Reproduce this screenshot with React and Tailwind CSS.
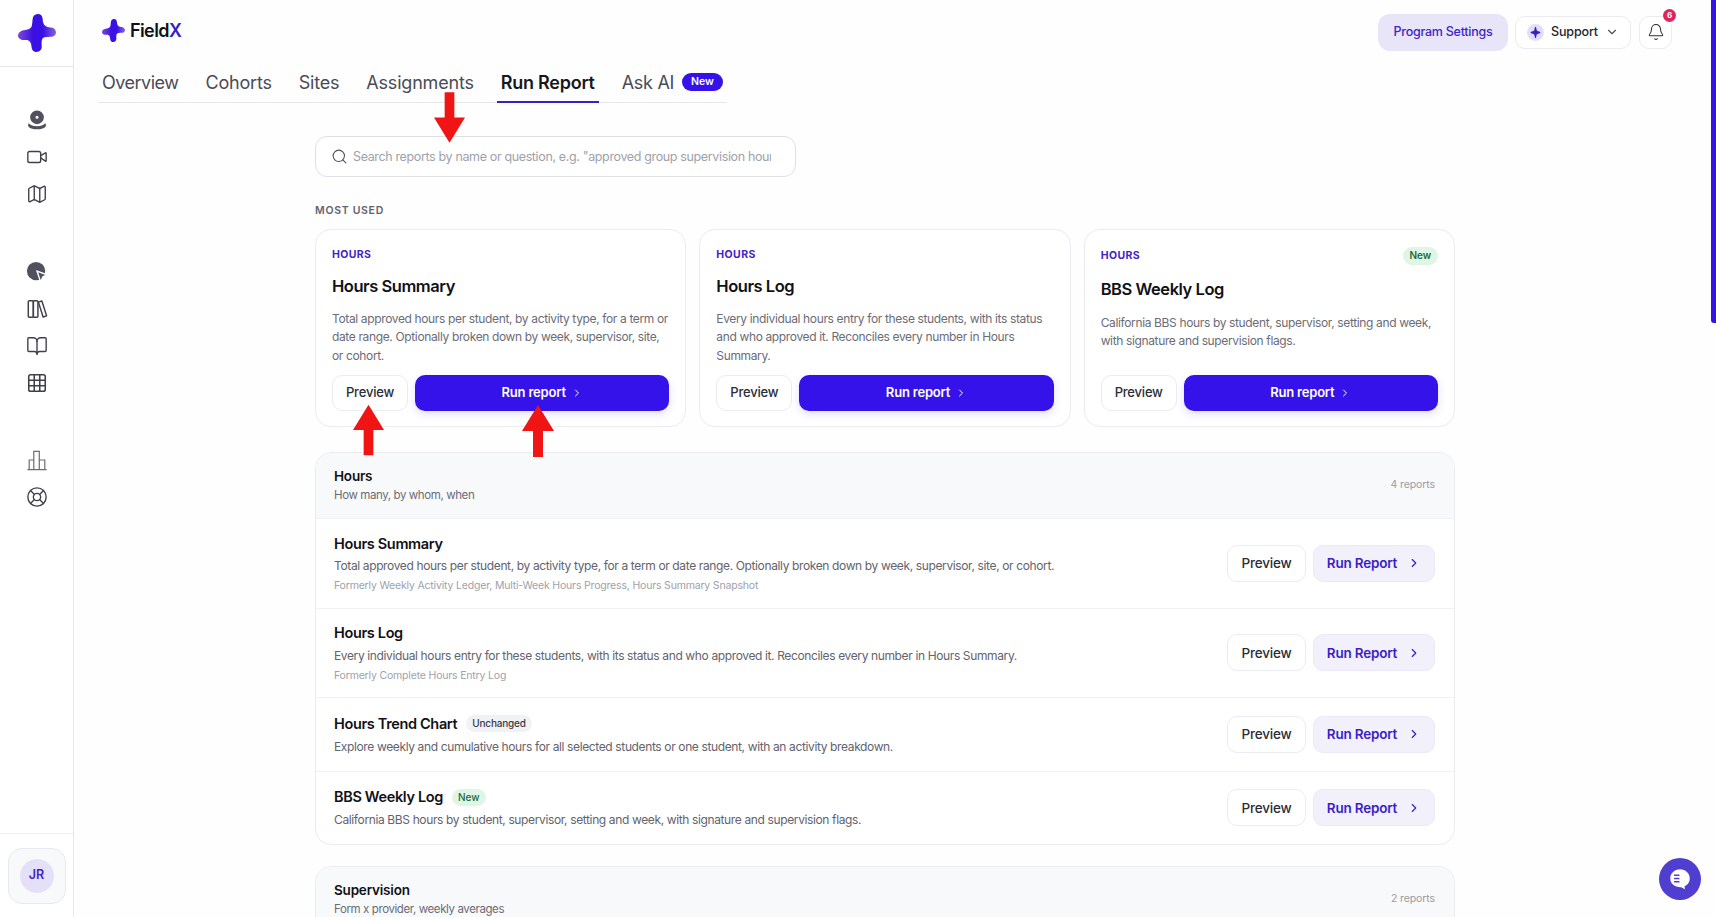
import React from "react";
import { Search, ChevronRight, ChevronDown, Bell, Video, Map, BookOpen, Grid3x3, LifeBuoy } from "lucide-react";

const font = { fontFamily: "Inter, 'Liberation Sans', sans-serif" };

const Logo = ({ className, id }) => (
  <svg viewBox="0 0 40 40" className={className}>
    <defs>
      <linearGradient id={id} x1="0" y1="0" x2="1" y2="0">
        <stop offset="0" stopColor="#7d4ad6" />
        <stop offset="0.4" stopColor="#3a10e5" />
        <stop offset="0.65" stopColor="#3a10e5" />
        <stop offset="1" stopColor="#8a63da" />
      </linearGradient>
    </defs>
    <path
      d="M21 0C24 0 25.700 2 25.900 5C26.200 9 26.800 12 31 13.600C33 14 36 13.800 37.500 15C39.500 16.500 40 18 40 19.500C40 22 37.500 24 34.600 24C31 24.300 27 24 25.700 26C24.600 28 24.800 31 25 34C25.200 37.500 23 40 19.500 40C16.500 40 14.500 38 14.300 35C14 31.500 13.500 29 10.500 27.500C8.500 26.800 6 28 3.500 27C1 26 0 24.500 0 22.900C0 19.500 3 17.500 6 17C10 16.500 13.500 15.500 14.500 12.500C15.400 9 15 5 16 3C17 1 19 0 21 0Z"
      fill={`url(#${id})`}
    />
  </svg>
);

const Arrow = ({ className, down }) => (
  <svg viewBox="0 0 32 52" className={className}>
    <path d={down ? "M11 0h10v26h11L16 52 0 26h11z" : "M16 0l16 26H21v26H11V26H0z"} fill="#f01414" />
  </svg>
);

const Webcam = () => (
  <svg viewBox="0 0 24 24" className="w-[22px] h-[22px]" fill="#50515c">
    <path fillRule="evenodd" d="M12 1.500a7.500 7.500 0 1 1 0 15 7.500 7.500 0 0 1 0-15zm0 5.800a1.700 1.700 0 1 0 0 3.400 1.700 1.700 0 0 0 0-3.400z" />
    <path d="M3 15.500c1.800 2 5 3.200 9 3.200s7.200-1.200 9-3.200c.8 1 1 2 .6 3-1 2.200-4.600 3.700-9.600 3.700S3.400 20.700 2.400 18.500c-.4-1-.2-2 .6-3z" />
  </svg>
);

const Pie = () => (
  <svg viewBox="0 0 24 24" className="w-[22px] h-[22px]">
    <circle cx="11" cy="11" r="10" fill="#50515c" />
    <path d="M12 11l11 4-4.500 2.200L16 23z" fill="#50515c" stroke="#ffffff" strokeWidth="1.500" />
  </svg>
);

const Books = () => (
  <svg viewBox="0 0 24 24" className="w-[22px] h-[22px]" fill="none" stroke="#3f404a" strokeWidth="1.600" strokeLinejoin="round">
    <rect x="2.500" y="3" width="5.500" height="18" rx="1" />
    <rect x="8" y="3" width="5" height="18" rx="1" />
    <path d="M13.500 4.500l3.800-1.300 5.200 16.300-3.800 1.300z" />
  </svg>
);

const Bars = () => (
  <svg viewBox="0 0 24 24" className="w-[22px] h-[22px]" fill="none" stroke="#6b6c76" strokeWidth="1.300">
    <path d="M1.500 22.500h21M3.500 22.500V12h5v10.500M8.500 22.500V2.500h6v20M14.500 12h6v10.500" />
  </svg>
);

const Spark = () => (
  <svg viewBox="0 0 24 24" className="w-[17px] h-[17px]">
    <circle cx="12" cy="12" r="12" fill="#e3def8" />
    <path d="M12 4c1 0 1.300 4 2 5.500 1 .6 5 1 5 2.500s-4 1.800-5 2.500C13.300 16 13 20 12 20s-1.300-4-2-5.500C9 13.800 5 13.500 5 12s4-1.900 5-2.500C10.700 8 11 4 12 4z" fill="#3a1fc9" />
  </svg>
);

const tabs = ["Cohorts", "Sites", "Assignments"];

const topCards = [
  {
    title: "Hours Summary",
    desc: "Total approved hours per student, by activity type, for a term or date range. Optionally broken down by week, supervisor, site, or cohort.",
  },
  {
    title: "Hours Log",
    desc: "Every individual hours entry for these students, with its status and who approved it. Reconciles every number in Hours Summary.",
  },
  {
    title: "BBS Weekly Log",
    desc: "California BBS hours by student, supervisor, setting and week, with signature and supervision flags.",
    isNew: true,
  },
];

const rows = [
  {
    title: "Hours Summary",
    desc: "Total approved hours per student, by activity type, for a term or date range. Optionally broken down by week, supervisor, site, or cohort.",
    old: "Formerly Weekly Activity Ledger, Multi-Week Hours Progress, Hours Summary Snapshot",
    h: "h-[90px]",
  },
  {
    title: "Hours Log",
    desc: "Every individual hours entry for these students, with its status and who approved it. Reconciles every number in Hours Summary.",
    old: "Formerly Complete Hours Entry Log",
    h: "h-[89px]",
  },
  {
    title: "Hours Trend Chart",
    badge: "Unchanged",
    desc: "Explore weekly and cumulative hours for all selected students or one student, with an activity breakdown.",
    h: "h-[74px]",
  },
  {
    title: "BBS Weekly Log",
    badge: "New",
    desc: "California BBS hours by student, supervisor, setting and week, with signature and supervision flags.",
    h: "h-[73px]",
  },
];

const TopCard = ({ card }) => (
  <div className="flex-1 h-[198px] border border-[#ebecf0] rounded-[16px] bg-white px-[16px] pt-[17px] pb-[15px] flex flex-col">
    <div className="flex items-center justify-between">
      <span className="text-[10.500px] font-bold tracking-[0.4px] text-[#3f25c4]">HOURS</span>
      {card.isNew && (
        <span className="h-[18px] px-[7px] flex items-center rounded-full bg-[#dff5e6] text-[10px] font-semibold tracking-[-0.1px] text-[#1e6b3c]">New</span>
      )}
    </div>
    <h3 className={`text-[16.500px] font-semibold tracking-[-0.45px] text-[#111116] ${card.isNew ? "mt-[12px]" : "mt-[11px]"}`}>{card.title}</h3>
    <p className="mt-[12px] text-[12px] leading-[18.200px] tracking-[-0.36px] text-[#6b6c76]">{card.desc}</p>
    <div className="mt-auto flex gap-[7px]">
      <button className="w-[76px] h-[36px] border border-[#ebecf0] rounded-[10px] bg-white text-[13px] font-medium tracking-[-0.2px] text-[#2b2c36]">Preview</button>
      <button className="flex-1 h-[36px] rounded-[10px] bg-[#3511ea] text-white text-[13px] font-semibold tracking-[-0.2px] flex items-center justify-center gap-[5px] shadow-[0_3px_8px_rgba(53,17,234,0.15)]">
        Run report <ChevronRight className="w-[12px] h-[12px]" />
      </button>
    </div>
  </div>
);

const Row = ({ row }) => (
  <div className={`${row.h} border-t border-[#f0f1f4] pl-[18px] pr-[19px] flex items-center justify-between`}>
    <div>
      <div className="flex items-center gap-[9px]">
        <span className="text-[14.500px] font-semibold tracking-[-0.35px] text-[#111116]">{row.title}</span>
        {row.badge === "Unchanged" && (
          <span className="h-[17px] px-[6px] flex items-center rounded-full bg-[#f1f2f5] text-[10px] font-medium tracking-[-0.2px] text-[#3a3b45]">Unchanged</span>
        )}
        {row.badge === "New" && (
          <span className="h-[17px] px-[6px] flex items-center rounded-full bg-[#dff5e6] text-[10px] font-medium text-[#1e6b3c]">New</span>
        )}
      </div>
      <p className="mt-[3px] text-[12px] tracking-[-0.37px] text-[#62636d]">{row.desc}</p>
      {row.old && <p className="mt-[3px] text-[10.500px] tracking-[-0.18px] text-[#a0a1aa]">{row.old}</p>}
    </div>
    <div className="flex gap-[7px]">
      <button className="w-[79px] h-[37px] border border-[#ebecf0] rounded-[10px] bg-white text-[13.500px] font-medium tracking-[-0.2px] text-[#2b2c36]">Preview</button>
      <button className="w-[122px] h-[37px] border border-[#ebe9f7] rounded-[10px] bg-[#f2f0fb] text-[#3a1fc9] text-[13.500px] font-semibold tracking-[-0.2px] flex items-center justify-center gap-[10px]">
        Run Report <ChevronRight className="w-[14px] h-[14px]" />
      </button>
    </div>
  </div>
);

const SectionHead = ({ title, sub, count }) => (
  <div className="h-[65px] bg-[#f8f9fb] pl-[18px] pr-[19px] flex items-center justify-between">
    <div>
      <div className="text-[13.500px] font-semibold tracking-[-0.2px] text-[#111116]">{title}</div>
      <div className="mt-[1px] text-[11.500px] tracking-[-0.4px] text-[#6b6c76]">{sub}</div>
    </div>
    <span className="text-[10.500px] tracking-[-0.1px] text-[#9a9ba4]">{count}</span>
  </div>
);

export default function App() {
  return (
    <div className="relative h-[917px] overflow-hidden flex bg-[#fefefe]" style={font}>
      {/* sidebar */}
      <aside className="w-[74px] shrink-0 border-r border-[#e6e7eb] bg-white flex flex-col">
        <div className="h-[67px] shrink-0 border-b border-[#e6e7eb] flex items-center justify-center">
          <Logo id="logo-a" className="w-[38px] h-[38px]" />
        </div>
        <div className="flex flex-col items-center text-[#3f404a]">
          <div className="mt-[42px] flex flex-col items-center gap-[15px]">
            <Webcam />
            <Video className="w-[22px] h-[22px]" strokeWidth={1.500} />
            <Map className="w-[22px] h-[22px]" strokeWidth={1.500} />
          </div>
          <div className="mt-[56px] flex flex-col items-center gap-[15px]">
            <Pie />
            <Books />
            <BookOpen className="w-[22px] h-[22px]" strokeWidth={1.500} />
            <Grid3x3 className="w-[22px] h-[22px]" strokeWidth={1.700} />
          </div>
          <div className="mt-[55px] flex flex-col items-center gap-[15px]">
            <Bars />
            <LifeBuoy className="w-[22px] h-[22px]" strokeWidth={1.500} />
          </div>
        </div>
        <div className="mt-auto h-[84px] border-t border-[#eeeff2] flex items-center justify-center">
          <div className="w-[58px] h-[56px] border border-[#e8e9ed] rounded-[14px] bg-[#f8f9fb] flex items-center justify-center">
            <div className="w-[34px] h-[34px] rounded-full bg-[#e4e0f8] flex items-center justify-center text-[12.500px] font-semibold text-[#3f25c4]">JR</div>
          </div>
        </div>
      </aside>

      {/* main */}
      <main className="flex-1 min-w-0 flex flex-col">
        <header className="h-[64px] shrink-0 pl-[28px] pr-[44px] flex items-center justify-between">
          <div className="mb-[3px] flex items-center gap-[5px]">
            <Logo id="logo-b" className="w-[23px] h-[23px]" />
            <span className="text-[18px] font-semibold tracking-[-0.6px] text-[#111116]">
              Field<span className="text-[#3a1fc9]">X</span>
            </span>
          </div>
          <div className="flex items-center gap-[7px]">
            <button className="h-[37px] w-[130px] rounded-[12px] bg-[#e8e5f9] text-[12.500px] font-medium tracking-[-0.25px] text-[#3f25c4]">Program Settings</button>
            <button className="h-[33px] w-[116px] mr-px border border-[#ebecf0] rounded-[10px] bg-white flex items-center justify-center gap-[7px] text-[12.500px] font-medium tracking-[-0.15px] text-[#22232c]">
              <Spark /> Support <ChevronDown className="w-[14px] h-[14px] text-[#50515c]" />
            </button>
            <div className="relative w-[33px] h-[33px] border border-[#ebecf0] rounded-[10px] bg-white flex items-center justify-center">
              <Bell className="w-[18px] h-[18px] text-[#2b2c36]" strokeWidth={1.400} />
              <span className="absolute -top-[8px] -right-[5px] w-[13px] h-[13px] rounded-full bg-[#e0245e] text-white text-[8px] font-bold flex items-center justify-center">6</span>
            </div>
          </div>
        </header>

        <nav className="ml-[24px] w-[629px] h-[39px] shrink-0 border-b border-[#e6e7eb] pl-[4px] flex gap-[27px] text-[18px] tracking-[-0.2px] text-[#4a4b56]">
          <span className="pt-[5px] tracking-[-0.5px]">Overview</span>
          {tabs.map((t) => (
            <span key={t} className="pt-[5px]">{t}</span>
          ))}
          <span className="relative pt-[5px] font-semibold tracking-[-0.25px] text-[#17171f]">
            Run Report
            <span className="absolute -left-[4px] -right-[4px] -bottom-px h-[2px] bg-[#3a1fc9]" />
          </span>
          <span className="pt-[5px] flex items-start gap-[8px] tracking-[-0.3px]">
            Ask AI
            <span className="mt-[4px] h-[18px] px-[9px] rounded-full bg-[#3511ea] text-white text-[10.500px] font-semibold tracking-normal flex items-center">New</span>
          </span>
        </nav>

        <div className="ml-[241px] w-[1140px] flex flex-col">
          <div className="mt-[33px] w-[481px] h-[41px] border border-[#dfe0e5] rounded-[12px] bg-white pl-[15px] pr-[24px] flex items-center gap-[5px]">
            <Search className="w-[17px] h-[17px] shrink-0 text-[#50515c]" strokeWidth={1.500} />
            <span className="pt-px text-[12.500px] tracking-[-0.36px] text-[#a0a1aa] whitespace-nowrap overflow-hidden">Search reports by name or question, e.g. "approved group supervision hours"</span>
          </div>

          <div className="mt-[26px] text-[10.500px] font-semibold tracking-[0.7px] text-[#62636d]">MOST USED</div>

          <div className="mt-[10px] flex gap-[13px]">
            {topCards.map((c) => (
              <TopCard key={c.title} card={c} />
            ))}
          </div>

          <section className="mt-[25px] border border-[#ebecf0] rounded-[16px] overflow-hidden bg-white">
            <SectionHead title="Hours" sub="How many, by whom, when" count="4 reports" />
            {rows.map((r) => (
              <Row key={r.title} row={r} />
            ))}
          </section>

          <section className="mt-[21px] border border-[#ebecf0] rounded-[16px] overflow-hidden bg-white">
            <SectionHead title="Supervision" sub="Form x provider, weekly averages" count="2 reports" />
          </section>
        </div>
      </main>

      {/* scrollbar thumb */}
      <div className="absolute top-0 right-0 w-[5px] h-[323px] rounded-bl-[3px] bg-[#3511ea]" />

      {/* chat bubble */}
      <div className="absolute left-[1659px] top-[858px] w-[42px] h-[42px] rounded-full bg-[#4f3ed0] flex items-center justify-center">
        <svg viewBox="0 0 24 24" className="w-[26px] h-[26px]">
          <path d="M12 3c5 0 9 3.800 9 8.500 0 3.300-1.800 6-4.800 7.300l.4 2.700-3.500-2C7.500 19.800 3 16.300 3 11.500 3 6.800 7 3 12 3z" fill="#ffffff" />
          <path d="M6.500 8.500h5M6.500 11.500h5M6.500 14.500h5" stroke="#4f3ed0" strokeWidth="1.500" />
        </svg>
      </div>

      {/* annotation arrows */}
      <Arrow down className="absolute left-[434px] top-[92px] w-[31px] h-[51px]" />
      <Arrow className="absolute left-[353px] top-[404px] w-[31px] h-[52px]" />
      <Arrow className="absolute left-[522px] top-[405px] w-[32px] h-[52px]" />
    </div>
  );
}
